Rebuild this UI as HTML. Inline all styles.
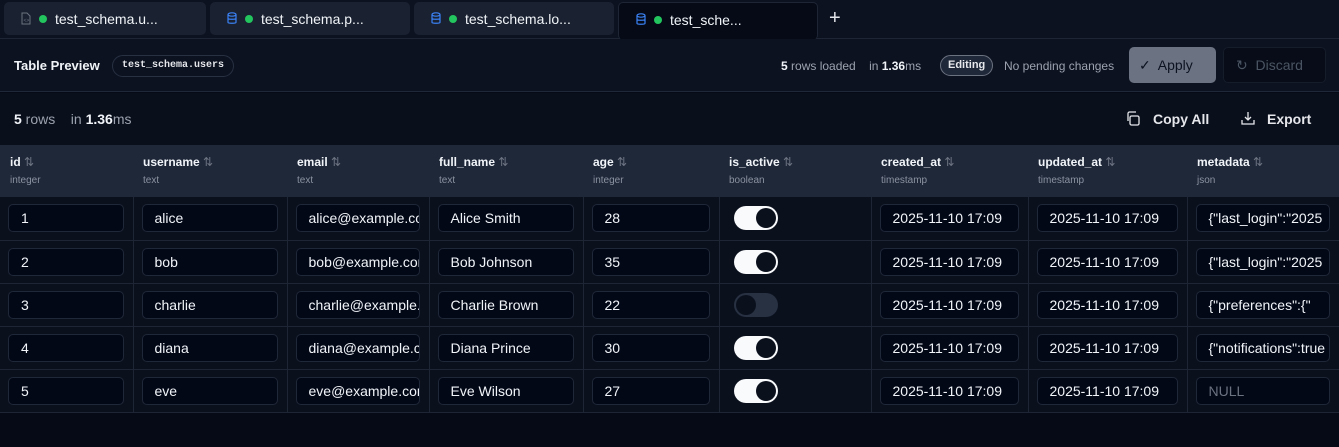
<!DOCTYPE html>
<html><head><meta charset="utf-8"><style>
*{box-sizing:border-box;margin:0;padding:0}
body{width:1339px;height:447px;overflow:hidden;background:#050a16;font-family:"Liberation Sans",Arial,sans-serif;color:#e5e7eb;position:relative}
.tabs{position:absolute;left:0;top:0;width:1339px;height:39px;background:#0d1220;border-bottom:1px solid #1e2636}
.tab{position:absolute;top:2px;height:33px;background:#1a2130;border-radius:5px;font-size:14px;color:#f1f5f9;display:flex;align-items:center;padding-left:17px}
.tab.act{background:#050a16;border:1px solid #1e2636;border-bottom:none}
.dot{width:8px;height:8px;border-radius:50%;background:#22c55e;margin:0 8px 0 8px}
.hdr{position:absolute;top:39px;left:0;width:1339px;height:53px;background:#0d1220;border-bottom:1px solid #1e2838}
.tb{position:absolute;top:93px;left:0;width:1339px;height:52px;background:#0a0f1c}
.abs{position:absolute;white-space:nowrap}
.g{color:#9ca3af}
table{position:absolute;top:145px;left:0;border-collapse:collapse;width:1339px;table-layout:fixed}
th{background:#1f2839;height:52px;text-align:left;vertical-align:top;padding:10px 0 0 10px;font-size:12px;font-weight:bold;color:#f1f5f9;white-space:nowrap;overflow:hidden}
th small{display:block;font-weight:normal;font-size:10px;color:#8b93a1;margin-top:6px}
th span{color:#6b7280;font-weight:normal}
td{height:43px;border-right:1px solid #1e2636;border-bottom:1px solid #1e2636;background:#0b101d;padding:0 9px 0 8px;font-size:14px;overflow:hidden}
td:last-child{border-right:none}
.in{height:28px;border:1px solid #1f2838;border-radius:5px;background:#030817;padding-left:12px;line-height:26px;overflow:hidden;white-space:nowrap;color:#f1f5f9}
.tg{width:44px;height:24px;border-radius:12px;background:#f8fafc;position:relative;margin-left:6px}
.tg::after{content:"";position:absolute;right:2px;top:2px;width:20px;height:20px;border-radius:50%;background:#0b101d}
.tg.off{background:#273142}
.tg.off::after{left:2px;right:auto;background:#0b101d}
</style></head><body>
<div class="tabs">
 <div class="tab" style="left:4px;width:202px"><svg width="10" height="13" viewBox="0 0 10 13"><path d="M1 1h5l3 3v8H1z" fill="none" stroke="#6b7280"/><text x="2.5" y="10" font-size="5" fill="#6b7280">&lt;&gt;</text></svg><span class="dot"></span>test_schema.u...</div>
 <div class="tab" style="left:210px;width:200px"><svg width="10" height="13" viewBox="0 0 10 13"><ellipse cx="5" cy="2.5" rx="4" ry="1.7" fill="none" stroke="#3b82f6" stroke-width="1.2"/><path d="M1 2.5v8c0 1 8 1 8 0v-8M1 6.5c0 1 8 1 8 0" fill="none" stroke="#3b82f6" stroke-width="1.2"/></svg><span class="dot"></span>test_schema.p...</div>
 <div class="tab" style="left:414px;width:200px"><svg width="10" height="13" viewBox="0 0 10 13"><ellipse cx="5" cy="2.5" rx="4" ry="1.7" fill="none" stroke="#3b82f6" stroke-width="1.2"/><path d="M1 2.5v8c0 1 8 1 8 0v-8M1 6.5c0 1 8 1 8 0" fill="none" stroke="#3b82f6" stroke-width="1.2"/></svg><span class="dot"></span>test_schema.lo...</div>
 <div class="tab act" style="left:618px;width:200px;height:38px;top:2px;padding-bottom:4px"><svg width="10" height="13" viewBox="0 0 10 13"><ellipse cx="5" cy="2.5" rx="4" ry="1.7" fill="none" stroke="#3b82f6" stroke-width="1.2"/><path d="M1 2.5v8c0 1 8 1 8 0v-8M1 6.5c0 1 8 1 8 0" fill="none" stroke="#3b82f6" stroke-width="1.2"/></svg><span class="dot"></span>test_sche...</div>
 <div class="abs" style="left:829px;top:7px;font-size:20px;color:#e5e7eb">+</div>
</div>
<div class="hdr">
 <div class="abs" style="left:14px;top:19px;font-size:13px;font-weight:bold;color:#f1f5f9">Table Preview</div>
 <div class="abs" style="left:112px;top:16px;height:22px;padding:0 9px;border:1px solid #273142;border-radius:11px;font-family:'Liberation Mono',monospace;font-size:10px;font-weight:bold;line-height:20px;color:#e5e7eb">test_schema.users</div>
 <div class="abs g" style="left:781px;top:20px;font-size:12px"><b style="color:#f1f5f9">5</b> rows loaded &nbsp;&nbsp; in <b style="color:#f1f5f9">1.36</b>ms</div>
 <div class="abs" style="left:940px;top:16px;height:21px;padding:0 7px;border:1px solid #6b7280;border-radius:11px;background:#1f2839;font-size:11px;font-weight:bold;line-height:19px">Editing</div>
 <div class="abs g" style="left:1004px;top:20px;font-size:12px">No pending changes</div>
 <div class="abs" style="left:1129px;top:8px;width:87px;height:36px;background:#6b7383;border-radius:5px;font-size:14px;color:#0d1220;line-height:36px;padding-left:10px">✓&nbsp; Apply</div>
 <div class="abs" style="left:1223px;top:8px;width:103px;height:36px;background:#070c18;border:1px solid #151c2a;border-radius:5px;font-size:14px;color:#4b5563;line-height:34px;padding-left:12px">↻&nbsp; Discard</div>
</div>
<div class="tb">
 <div class="abs g" style="left:14px;top:18px;font-size:14px"><b style="color:#f1f5f9">5</b> rows &nbsp;&nbsp; in <b style="color:#f1f5f9">1.36</b>ms</div>
 <svg class="abs" style="left:1126px;top:18px" width="14" height="15" viewBox="0 0 14 15"><rect x="4" y="5" width="9" height="9" rx="1.5" fill="none" stroke="#e5e7eb" stroke-width="1.3"/><path d="M2 10V2.5C2 1.7 2.7 1 3.5 1H10" fill="none" stroke="#e5e7eb" stroke-width="1.3"/></svg>
 <div class="abs" style="left:1153px;top:18px;font-size:14px;font-weight:bold">Copy All</div>
 <svg class="abs" style="left:1241px;top:18px" width="14" height="15" viewBox="0 0 14 15"><path d="M7 1v8M4 6l3 3 3-3M1 9v4h12V9" fill="none" stroke="#e5e7eb" stroke-width="1.3"/></svg>
 <div class="abs" style="left:1267px;top:18px;font-size:14px;font-weight:bold">Export</div>
</div>
<table>
<colgroup><col style="width:133px"><col style="width:154px"><col style="width:142px"><col style="width:154px"><col style="width:136px"><col style="width:152px"><col style="width:157px"><col style="width:159px"><col style="width:152px"></colgroup>
<tr>
<th>id <span>⇅</span><small>integer</small></th>
<th>username <span>⇅</span><small>text</small></th>
<th>email <span>⇅</span><small>text</small></th>
<th>full_name <span>⇅</span><small>text</small></th>
<th>age <span>⇅</span><small>integer</small></th>
<th>is_active <span>⇅</span><small>boolean</small></th>
<th>created_at <span>⇅</span><small>timestamp</small></th>
<th>updated_at <span>⇅</span><small>timestamp</small></th>
<th>metadata <span>⇅</span><small>json</small></th>
</tr>
<tr><td><div class="in">1</div></td><td><div class="in">alice</div></td><td><div class="in">alice@example.com</div></td><td><div class="in">Alice Smith</div></td><td><div class="in">28</div></td><td><div class="tg"></div></td><td><div class="in">2025-11-10 17:09</div></td><td><div class="in">2025-11-10 17:09</div></td><td><div class="in">{"last_login":"2025</div></td></tr>
<tr><td><div class="in">2</div></td><td><div class="in">bob</div></td><td><div class="in">bob@example.com</div></td><td><div class="in">Bob Johnson</div></td><td><div class="in">35</div></td><td><div class="tg"></div></td><td><div class="in">2025-11-10 17:09</div></td><td><div class="in">2025-11-10 17:09</div></td><td><div class="in">{"last_login":"2025</div></td></tr>
<tr><td><div class="in">3</div></td><td><div class="in">charlie</div></td><td><div class="in">charlie@example.com</div></td><td><div class="in">Charlie Brown</div></td><td><div class="in">22</div></td><td><div class="tg off"></div></td><td><div class="in">2025-11-10 17:09</div></td><td><div class="in">2025-11-10 17:09</div></td><td><div class="in">{"preferences":{"</div></td></tr>
<tr><td><div class="in">4</div></td><td><div class="in">diana</div></td><td><div class="in">diana@example.com</div></td><td><div class="in">Diana Prince</div></td><td><div class="in">30</div></td><td><div class="tg"></div></td><td><div class="in">2025-11-10 17:09</div></td><td><div class="in">2025-11-10 17:09</div></td><td><div class="in">{"notifications":true</div></td></tr>
<tr><td><div class="in">5</div></td><td><div class="in">eve</div></td><td><div class="in">eve@example.com</div></td><td><div class="in">Eve Wilson</div></td><td><div class="in">27</div></td><td><div class="tg"></div></td><td><div class="in">2025-11-10 17:09</div></td><td><div class="in">2025-11-10 17:09</div></td><td><div class="in" style="color:#6b7280">NULL</div></td></tr>
</table>
</body></html>
